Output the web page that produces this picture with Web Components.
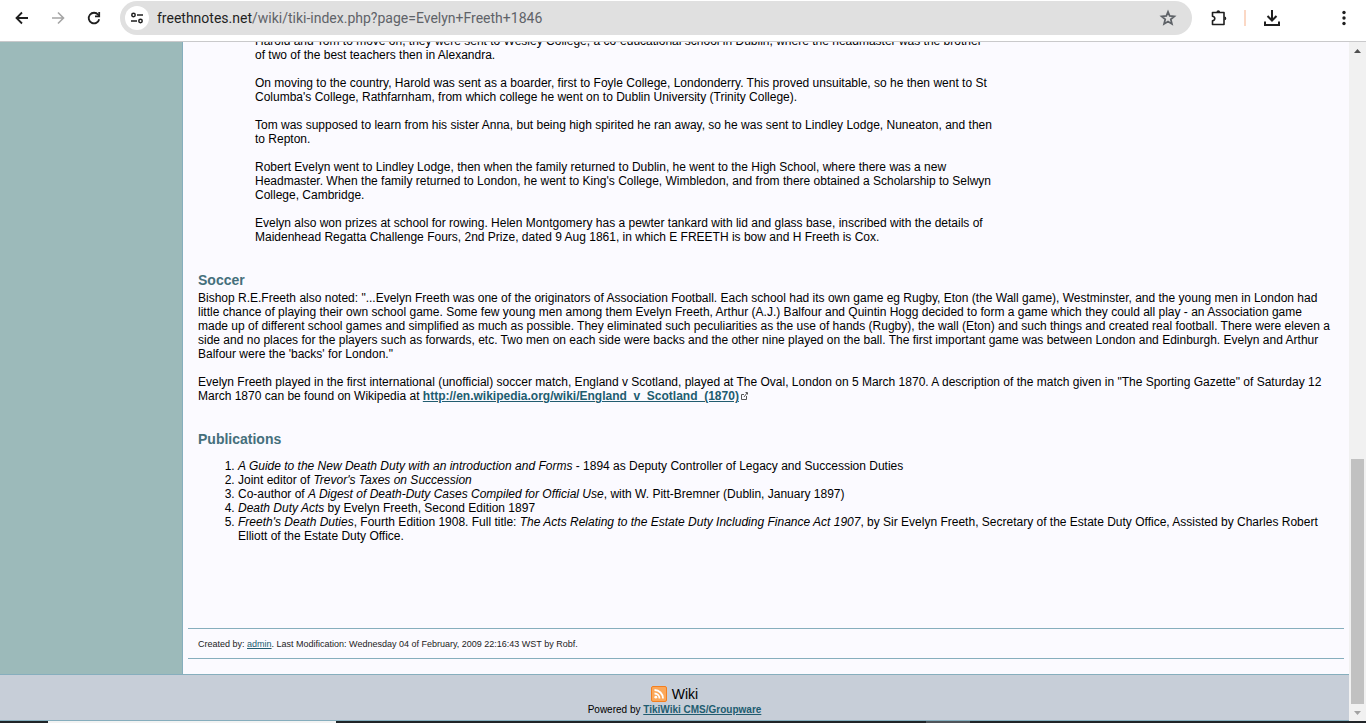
<!DOCTYPE html>
<html lang="en">
<head>
<meta charset="utf-8">
<title>Evelyn Freeth 1846</title>
<style>
  html, body {
    height: 100%;
    margin: 0;
  }
  body {
    font: 12px/14px "Liberation Sans", Arial, sans-serif;
    color: #000;
  }
  a {
    color: #215c70;
  }
  p {
    margin: 0 0 14px;
  }
  p:last-child {
    margin-bottom: 0;
  }
  ol {
    margin: 0;
    padding-left: 40px;
  }
</style>
</head>
<body>
<browser-window>
  <browser-toolbar slot="toolbar" host="freethnotes.net" path="/wiki/tiki-index.php?page=Evelyn+Freeth+1846"></browser-toolbar>
  <wiki-page>
    <wiki-quote>
      <p>Harold and Tom to move on, they were sent to Wesley College, a co-educational school in Dublin, where the headmaster was the brother of two of the best teachers then in Alexandra.</p>
      <p>On moving to the country, Harold was sent as a boarder, first to Foyle College, Londonderry. This proved unsuitable, so he then went to St Columba's College, Rathfarnham, from which college he went on to Dublin University (Trinity College).</p>
      <p>Tom was supposed to learn from his sister Anna, but being high spirited he ran away, so he was sent to Lindley Lodge, Nuneaton, and then to Repton.</p>
      <p>Robert Evelyn went to Lindley Lodge, then when the family returned to Dublin, he went to the High School, where there was a new Headmaster. When the family returned to London, he went to King's College, Wimbledon, and from there obtained a Scholarship to Selwyn College, Cambridge.</p>
      <p>Evelyn also won prizes at school for rowing. Helen Montgomery has a pewter tankard with lid and glass base, inscribed with the details of Maidenhead Regatta Challenge Fours, 2nd Prize, dated 9 Aug 1861, in which E FREETH is bow and H Freeth is Cox.</p>
    </wiki-quote>
    <wiki-section heading="Soccer">
      <p>Bishop R.E.Freeth also noted: "...Evelyn Freeth was one of the originators of Association Football. Each school had its own game eg Rugby, Eton (the Wall game), Westminster, and the young men in London had little chance of playing their own school game. Some few young men among them Evelyn Freeth, Arthur (A.J.) Balfour and Quintin Hogg decided to form a game which they could all play - an Association game made up of different school games and simplified as much as possible. They eliminated such peculiarities as the use of hands (Rugby), the wall (Eton) and such things and created real football. There were eleven a side and no places for the players such as forwards, etc. Two men on each side were backs and the other nine played on the ball. The first important game was between London and Edinburgh. Evelyn and Arthur Balfour were the 'backs' for London."</p>
      <p>Evelyn Freeth played in the first international (unofficial) soccer match, England v Scotland, played at The Oval, London on 5 March 1870. A description of the match given in "The Sporting Gazette" of Saturday 12 March 1870 can be found on Wikipedia at <external-link href="http://en.wikipedia.org/wiki/England_v_Scotland_(1870)">http://en.wikipedia.org/wiki/England_v_Scotland_(1870)</external-link></p>
    </wiki-section>
    <wiki-section heading="Publications" spaced>
      <ol>
        <li><i>A Guide to the New Death Duty with an introduction and Forms</i> - 1894 as Deputy Controller of Legacy and Succession Duties</li>
        <li>Joint editor of <i>Trevor's Taxes on Succession</i></li>
        <li>Co-author of <i>A Digest of Death-Duty Cases Compiled for Official Use</i>, with W. Pitt-Bremner (Dublin, January 1897)</li>
        <li><i>Death Duty Acts</i> by Evelyn Freeth, Second Edition 1897</li>
        <li><i>Freeth's Death Duties</i>, Fourth Edition 1908. Full title: <i>The Acts Relating to the Estate Duty Including Finance Act 1907</i>, by Sir Evelyn Freeth, Secretary of the Estate Duty Office, Assisted by Charles Robert Elliott of the Estate Duty Office.</li>
      </ol>
    </wiki-section>
    <page-credits slot="credits">Created by: <a href="#admin">admin</a>. Last Modification: Wednesday 04 of February, 2009 22:16:43 WST by Robf.</page-credits>
    <wiki-footer slot="footer">Powered by <a href="#tikiwiki"><b>TikiWiki CMS/Groupware</b></a></wiki-footer>
  </wiki-page>
  <scroll-bar slot="scrollbar"></scroll-bar>
  <task-bar slot="taskbar"></task-bar>
</browser-window>

<script>
/** Base for all elements: clones the static markup into an open shadow root. */
class ShadowElement extends HTMLElement {
  constructor () {
    super()
    const template = document.createElement('template')
    template.innerHTML = this.constructor.markup
    this.attachShadow({ mode: 'open' }).appendChild(template.content.cloneNode(true))
  }
}

/** Frame with the toolbar, the scrolled page and the scroll bar. */
class BrowserWindow extends ShadowElement {
  static get markup () {
    return `
      <style>
        :host {
          display: flex;
          flex-direction: column;
          height: 100vh;
          overflow: hidden;
        }
        .body {
          display: flex;
          flex: 1;
          min-height: 0;
        }
        /* the page is scrolled down to its end */
        main {
          display: flex;
          flex: 1;
          min-width: 0;
          flex-direction: column;
          justify-content: flex-end;
          overflow: hidden;
        }
      </style>
      <slot name="toolbar"></slot>
      <div class="body">
        <main><slot></slot></main>
        <slot name="scrollbar"></slot>
      </div>
      <slot name="taskbar"></slot>
    `
  }
}

/** Navigation buttons, address field and browser actions. */
class BrowserToolbar extends ShadowElement {
  static get markup () {
    return `
      <style>
        :host {
          display: flex;
          align-items: center;
          box-sizing: border-box;
          height: 42px;
          padding: 0 12px 5px 4px;
          border-bottom: 1px solid #c9c9cb;
          background: #fff;
          flex: none;
        }
        button {
          display: grid;
          place-items: center;
          width: 36px;
          height: 34px;
          padding: 0;
          border: 0;
          background: none;
          color: #1f1f1f;
        }
        button[disabled] {
          color: #a5a5a5;
        }
        svg {
          display: block;
        }
        .address {
          display: flex;
          flex: 1;
          align-items: center;
          height: 34px;
          margin: 0 8px;
          border-radius: 17px;
          background: #e0e0e0;
          font: 14px/20px Roboto, sans-serif;
          color: #5f6368;
        }
        .address .site {
          width: 24px;
          height: 24px;
          margin: 0 8px 0 5px;
          border-radius: 50%;
          background: #fff;
        }
        .url {
          flex: 1;
          color: #5f6368;
          text-decoration: none;
        }
        .url b {
          font-weight: 400;
          color: #1f1f1f;
        }
        .address .star {
          width: 48px;
          color: #5f6368;
        }
        .divider {
          width: 2px;
          height: 16px;
          margin: 0 8px;
          background: #fbd8c5;
        }
        .menu {
          margin-left: auto;
          width: 20px;
        }
        .actions {
          display: flex;
          align-items: center;
          width: 154px;
        }
      </style>
      <button aria-label="Back"><svg width="16" height="16" viewBox="0 0 16 16" fill="none" stroke="currentColor" stroke-width="1.8"><path d="M14 8H3M8 2.5 2.5 8 8 13.5"/></svg></button>
      <button aria-label="Forward" disabled><svg width="16" height="16" viewBox="0 0 16 16" fill="none" stroke="currentColor" stroke-width="1.6"><path d="M2 8H13M8 2.5 13.5 8 8 13.5"/></svg></button>
      <button aria-label="Reload"><svg width="16" height="16" viewBox="0 0 16 16" fill="none" stroke="currentColor" stroke-width="1.8"><path d="M13.2 9.2A5.3 5.3 0 1 1 12.2 4.8L13 5.8"/><path d="M13.2 2V6.3H9"/></svg></button>
      <div class="address">
        <button class="site" aria-label="View site information"><svg width="14" height="14" viewBox="0 0 14 14" fill="none" stroke="#1f1f1f" stroke-width="1.5"><circle cx="3.5" cy="4" r="1.7"/><path d="M7 4H13M1 10H7"/><circle cx="10.5" cy="10" r="1.7"/></svg></button>
        <a class="url" href="#"><b></b><span></span></a>
        <button class="star" aria-label="Bookmark this tab"><svg width="18" height="18" viewBox="0 0 18 18" fill="none" stroke="currentColor" stroke-width="1.8"><path d="M9 2.8 10.7 7 15.3 7.4 11.8 10.4 12.9 14.9 9 12.5 5.1 14.9 6.200 10.4 2.7 7.4 7.300 7Z"/></svg></button>
      </div>
      <div class="actions">
        <button aria-label="Extensions"><svg width="18" height="18" viewBox="0 0 18 18" fill="none" stroke="currentColor" stroke-width="1.6" stroke-linejoin="round"><path d="M3.500 3.500H15V15.500H3.500V11.800Q5.800 11.300 5.800 9.500T3.500 7.200Z"/><path d="M7.500 3A1.800 1.800 0 0 1 11.100 3ZM15.500 7.600A1.800 1.800 0 0 1 15.500 11.200Z" fill="currentColor" stroke="none"/></svg></button>
        <span class="divider"></span>
        <button aria-label="Downloads"><svg width="18" height="18" viewBox="0 0 18 18" fill="none" stroke="currentColor" stroke-width="2"><path d="M9 1V11M4.500 7 9 11.500 13.500 7M2 12.500V16H16V12.500"/></svg></button>
        <button class="menu" aria-label="Menu"><svg width="4" height="16" viewBox="0 0 4 16" fill="currentColor"><circle cx="2" cy="2.500" r="1.700"/><circle cx="2" cy="8" r="1.700"/><circle cx="2" cy="13.500" r="1.700"/></svg></button>
      </div>
    `
  }

  connectedCallback () {
    this.shadowRoot.querySelector('.url b').textContent = this.getAttribute('host')
    this.shadowRoot.querySelector('.url span').textContent = this.getAttribute('path')
  }
}

/** Wiki layout: empty side column, article, credits and footer. */
class WikiPage extends ShadowElement {
  static get markup () {
    return `
      <style>
        :host {
          display: block;
          flex: none;
          background: #fbfaff;
        }
        .columns {
          display: grid;
          grid-template-columns: 182px 1fr;
        }
        aside {
          background: #9cbaba;
        }
        .center {
          border-left: 1px solid #86aebd;
          padding: 0 5px 15px;
        }
        article {
          padding: 0 10px 85px;
        }
      </style>
      <div class="columns">
        <aside></aside>
        <div class="center">
          <article><slot></slot></article>
          <slot name="credits"></slot>
        </div>
      </div>
      <slot name="footer"></slot>
    `
  }
}

class WikiQuote extends ShadowElement {
  static get markup () {
    return `
      <style>
        :host {
          display: block;
          max-width: 738px;
          margin-left: 57px;
        }
      </style>
      <slot></slot>
    `
  }
}

/** Titled part of the article. */
class WikiSection extends ShadowElement {
  static get markup () {
    return `
      <style>
        :host {
          display: block;
          margin-top: 28px;
        }
        h2 {
          margin: 0 0 3px;
          font-size: 14px;
          line-height: 16px;
          color: #456f7b;
        }
        :host([spaced]) h2 {
          margin-bottom: 12px;
        }
      </style>
      <h2></h2>
      <slot></slot>
    `
  }

  connectedCallback () {
    this.shadowRoot.querySelector('h2').textContent = this.getAttribute('heading')
  }
}

/** Bold link followed by the mark for external pages. */
class ExternalLink extends ShadowElement {
  static get markup () {
    return `
      <style>
        :host {
          display: inline;
        }
        a {
          color: #215c70;
          font-weight: 700;
        }
      </style>
      <a><slot></slot></a><svg width="9" height="9" viewBox="0 0 9 9" fill="none" stroke="#555"><path d="M5 3.5H2.5V8.5H7.5V5M5 6 8 2M6.5 1.5H8.5V3.5"/></svg>
    `
  }

  connectedCallback () {
    this.shadowRoot.querySelector('a').href = this.getAttribute('href')
  }
}

class PageCredits extends ShadowElement {
  static get markup () {
    return `
      <style>
        :host {
          display: block;
          padding: 8px 10px 7px;
          border: solid #86aebd;
          border-width: 1px 0;
          font-size: 9px;
          color: #222;
        }
      </style>
      <slot></slot>
    `
  }
}

/** Feed link and the powered-by line. */
class WikiFooter extends ShadowElement {
  static get markup () {
    return `
      <style>
        :host {
          display: flex;
          flex-direction: column;
          align-items: center;
          padding: 11px 0 3px;
          border: solid #86aebd;
          border-width: 1px 0;
          background: #c7ced8;
          font-size: 10px;
        }
        .feed {
          display: flex;
          align-items: flex-start;
          gap: 5px;
          font-size: 14px;
          line-height: 17px;
          color: #000;
          text-decoration: none;
        }
        p {
          margin: 0;
        }
      </style>
      <a class="feed" href="#rss">
        <svg width="16" height="16" viewBox="0 0 16 16">
          <rect x=".5" y=".5" width="15" height="15" rx="1.500" fill="#fba85a" stroke="#f47f1f"/>
          <g fill="none" stroke="#fff" stroke-width="1.800"><path d="M3.500 7.500A5 5 0 0 1 8.500 12.500M3.500 4A8.500 8.500 0 0 1 12 12.500"/></g>
          <circle cx="4.800" cy="11.200" r="1.400" fill="#fff"/>
        </svg>
        <span>Wiki</span>
      </a>
      <p><slot></slot></p>
    `
  }
}

class ScrollBar extends ShadowElement {
  static get markup () {
    return `
      <style>
        :host {
          display: flex;
          flex-direction: column;
          width: 17px;
          flex: none;
          background: #f1f1f1;
        }
        .track {
          display: flex;
          flex: 1;
          flex-direction: column;
          justify-content: flex-end;
          padding: 0 2px;
        }
        .thumb {
          height: 38%;
          background: #c1c1c1;
        }
        svg {
          display: block;
        }
      </style>
      <svg width="17" height="17" viewBox="0 0 17 17" fill="#505050"><path d="M5 11H12L8.500 7Z"/></svg>
      <div class="track"><div class="thumb"></div></div>
      <svg width="17" height="17" viewBox="0 0 17 17" fill="#a3a3a3"><path d="M5 7H12L8.500 11Z"/></svg>
    `
  }
}

/** Upper edge of the desktop task bar. */
class TaskBar extends ShadowElement {
  static get markup () {
    return `
      <style>
        :host {
          display: flex;
          height: 2px;
          padding: 0 396px 0 48px;
          justify-content: space-between;
          background: #202427;
          flex: none;
        }
        .search {
          width: 288px;
          background: #f3f3f3;
        }
        .active {
          width: 44px;
          background: #50555a;
        }
      </style>
      <div class="search"></div>
      <div class="active"></div>
    `
  }
}

customElements.define('browser-window', BrowserWindow)
customElements.define('browser-toolbar', BrowserToolbar)
customElements.define('wiki-page', WikiPage)
customElements.define('wiki-quote', WikiQuote)
customElements.define('wiki-section', WikiSection)
customElements.define('external-link', ExternalLink)
customElements.define('page-credits', PageCredits)
customElements.define('wiki-footer', WikiFooter)
customElements.define('scroll-bar', ScrollBar)
customElements.define('task-bar', TaskBar)
</script>
</body>
</html>
